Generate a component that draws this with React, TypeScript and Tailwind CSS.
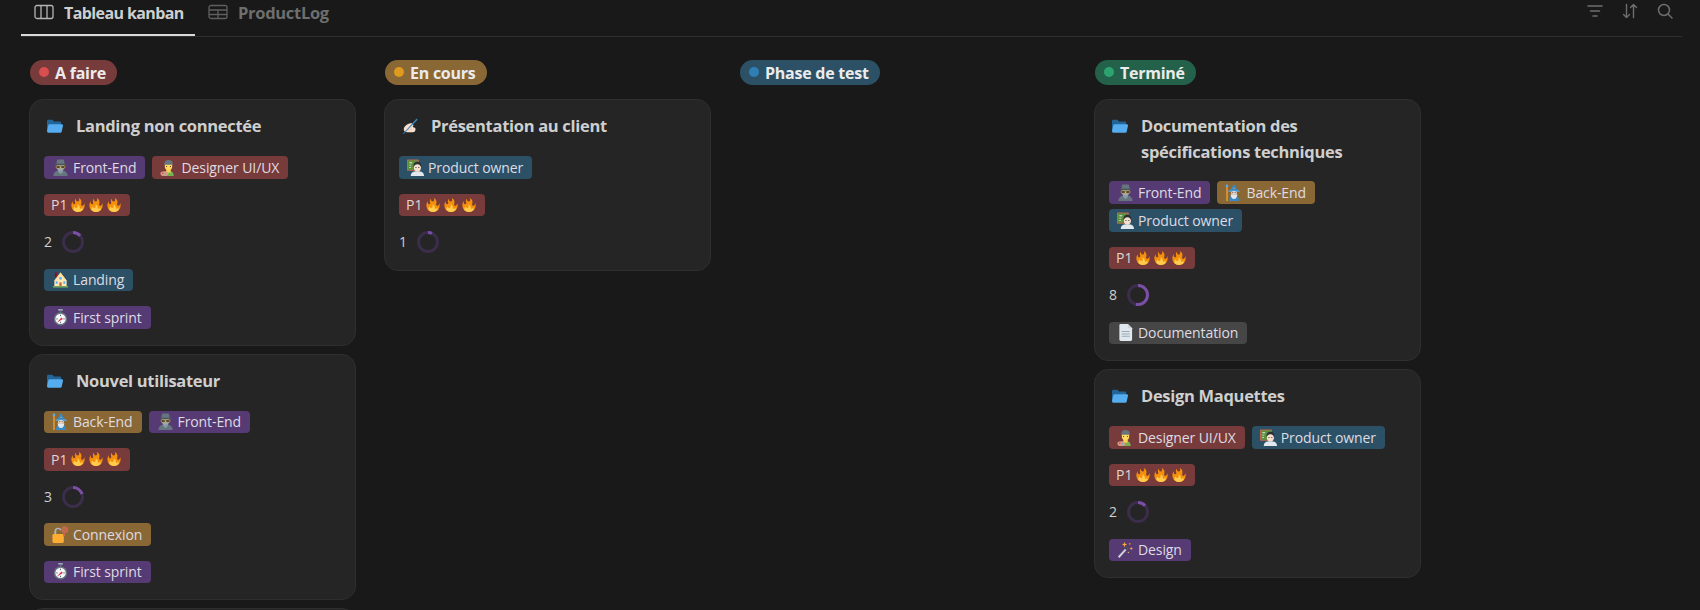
type EmojiName = "folder" | "write" | "spy" | "artist" | "wizard" | "teacher" | "fire" | "house" | "watch" | "lock" | "doc" | "wand";

// small hand drawn emoji, the page has no colour emoji font
function Emoji({ name, className }: { name: EmojiName; className: string }) {
    return (
        <svg viewBox="0 0 36 36" className={className}>
            {name === "folder" && (
                <>
                    <path d="M0 7a3 3 0 0 1 3-3h9l4 4h13a3 3 0 0 1 3 3v20H3a3 3 0 0 1-3-3z" fill="#226699" />
                    <path d="M6 14h27a3 3 0 0 1 3 3.500L33 31a3 3 0 0 1-3 2H3a3 3 0 0 1-3-3l3-14a3 3 0 0 1 3-2z" fill="#55ACEE" />
                </>
            )}
            {name === "write" && (
                <>
                    <path d="M4 24c1-5 6-9 11-11l6-2 5 5-2 4 5 2c3 3 1 10-4 10H12c-5 0-9-3-8-8z" fill="#F7DECE" />
                    <path d="M10 25c4 2 9 2 13 0" stroke="#E0B9A3" strokeWidth="1.500" fill="none" />
                    <path d="M33 1 4 33l-3 3 4-1L35 4z" fill="#3B88C3" />
                </>
            )}
            {name === "spy" && (
                <>
                    <path d="M3 36c0-8 6-12 15-12s15 4 15 12z" fill="#66757F" />
                    <path d="M13 22h10v6l-5 4-5-4z" fill="#8899A6" />
                    <ellipse cx="18" cy="17" rx="8" ry="8" fill="#99AAB5" />
                    <path d="M11 1h14l2 10H9z" fill="#66757F" />
                    <rect x="4" y="10" width="28" height="3" rx="1.500" fill="#4B545C" />
                    <rect x="9" y="14.500" width="8" height="5" rx="1" fill="#292F33" stroke="#FFCC4D" strokeWidth="1.200" />
                    <rect x="19" y="14.500" width="8" height="5" rx="1" fill="#292F33" stroke="#FFCC4D" strokeWidth="1.200" />
                </>
            )}
            {name === "artist" && (
                <>
                    <path d="M7 36c0-8 5-11 11-11s11 3 11 11z" fill="#77B255" />
                    <path d="M13 23h10l-1 6h-8z" fill="#FFCC4D" />
                    <ellipse cx="18" cy="15" rx="8" ry="9" fill="#FFDC5D" />
                    <path d="M9 11c0-7 4-9 9-9s9 2 9 7v3H9z" fill="#66757F" />
                    <rect x="13" y="15" width="2" height="2" fill="#662113" />
                    <rect x="21" y="15" width="2" height="2" fill="#662113" />
                    <ellipse cx="9" cy="31" rx="8" ry="5" fill="#D99E82" />
                    <circle cx="6" cy="30" r="1.600" fill="#DD2E44" />
                    <circle cx="11" cy="32" r="1.600" fill="#55ACEE" />
                </>
            )}
            {name === "wizard" && (
                <>
                    <rect x="3" y="5" width="2.500" height="31" fill="#FFAC33" />
                    <circle cx="4.200" cy="4" r="2.800" fill="#55ACEE" />
                    <path d="M8 36c0-8 4-12 11-12s11 4 11 12z" fill="#3B88C3" />
                    <path d="M19 0 10 15h18z" fill="#3B88C3" />
                    <circle cx="19" cy="9" r="1.200" fill="#FFCC4D" />
                    <rect x="7" y="14" width="24" height="2.500" rx="1.200" fill="#55ACEE" />
                    <ellipse cx="19" cy="19" rx="6" ry="4" fill="#F7DECE" />
                    <path d="M12 21c2 2 12 2 14 0 0 7-3 11-7 11s-7-4-7-11z" fill="#E1E8ED" />
                    <rect x="15.500" y="17.500" width="2" height="2" fill="#292F33" />
                    <rect x="20.500" y="17.500" width="2" height="2" fill="#292F33" />
                </>
            )}
            {name === "teacher" && (
                <>
                    <rect x="0" y="1" width="25" height="24" rx="1.500" fill="#C1694F" />
                    <rect x="2" y="3" width="21" height="20" fill="#5C913B" />
                    <path d="M5 7h6v2H5zM5 12h4v2H5zM5 17h3v2H5z" fill="#E1E8ED" />
                    <path d="M8 36c0-7 5-10 14-10s14 3 14 10z" fill="#E1E8ED" />
                    <ellipse cx="22" cy="18" rx="7.500" ry="8.500" fill="#F7DECE" />
                    <path d="M14 18c-1-9 3-12 8-12s9 3 8 12c-1-4-3-7-8-7s-7 3-8 7z" fill="#292F33" />
                    <rect x="18" y="17" width="2" height="2" fill="#292F33" />
                    <rect x="24" y="17" width="2" height="2" fill="#292F33" />
                </>
            )}
            {name === "fire" && (
                <>
                    <path d="M35 19c0-2.062-.367-4.039-1.04-5.868-.46 5.389-3.333 8.157-6.335 6.868-2.812-1.208-.917-5.917-.777-8.164.236-3.809-.012-8.169-6.931-11.794 2.875 5.500.333 8.917-2.333 9.125-2.958.231-5.667-2.542-4.667-7.042-3.238 2.386-3.332 6.402-2.333 9 1.042 2.708-.042 4.958-2.583 5.208-2.84.28-4.418-3.041-2.963-8.333C2.52 10.965 1 14.805 1 19c0 9.389 7.611 17 17 17s17-7.611 17-17z" fill="#F4900C" />
                    <path d="M28.394 23.999c.148 3.084-2.561 4.293-4.019 3.709-2.106-.843-1.541-2.291-2.083-5.291s-2.625-5.083-5.708-6c2.250 6.333-1.247 8.667-3.080 9.084-1.872.426-3.753-.001-3.968-4.007C7.352 23.668 6 26.676 6 30c0 .368.023.73.055 1.090C9.125 34.124 13.342 36 18 36s8.875-1.876 11.945-4.910c.032-.36.055-.722.055-1.090 0-2.187-.584-4.236-1.606-6.001z" fill="#FFCC4D" />
                </>
            )}
            {name === "house" && (
                <>
                    <rect x="6" y="3" width="4" height="10" fill="#A0041E" />
                    <path d="M5 20 13 10l5-7 6 8 7 9v12H5z" fill="#FFE8B6" />
                    <path d="M18 3 5 20l2 1 11-14 11 14 2-1z" fill="#FFD983" />
                    <rect x="15.500" y="24" width="5" height="8" fill="#C1694F" />
                    <rect x="8" y="22" width="4" height="5" fill="#55ACEE" />
                    <rect x="24" y="22" width="4" height="5" fill="#55ACEE" />
                    <rect x="15.500" y="13" width="5" height="5" fill="#55ACEE" />
                    <rect x="2" y="32" width="32" height="3" fill="#77B255" />
                </>
            )}
            {name === "watch" && (
                <>
                    <rect x="13" y="0" width="10" height="3.500" rx="1" fill="#99AAB5" />
                    <rect x="16.500" y="3" width="3" height="5" fill="#66757F" />
                    <circle cx="18" cy="21" r="14" fill="#66757F" />
                    <circle cx="18" cy="21" r="11" fill="#F5F8FA" />
                    <path d="M10 29 20 18l3 3z" fill="#DD2E44" />
                    <path d="M18 12v3M27 21h-3M9 21h3M18 30v-3" stroke="#292F33" strokeWidth="1.500" />
                </>
            )}
            {name === "lock" && (
                <>
                    <path d="M5 19V11a8 8 0 0 1 15-3l-3 2a4 4 0 0 0-8 1v8z" fill="#AAB8C2" />
                    <rect x="1" y="17" width="24" height="19" rx="3" fill="#FFAC33" />
                    <path d="M24 15v7h4v-7z" fill="#C1694F" />
                    <circle cx="27" cy="8" r="7.500" fill="#C1694F" />
                </>
            )}
            {name === "doc" && (
                <>
                    <path d="M5 3a3 3 0 0 1 3-3h15l9 9v24a3 3 0 0 1-3 3H8a3 3 0 0 1-3-3z" fill="#E1E8ED" />
                    <path d="M23 0v7a2 2 0 0 0 2 2h7z" fill="#CCD6DD" />
                    <path d="M10 15h17v2H10zM10 20h17v2H10zM10 25h17v2H10z" fill="#99AAB5" />
                </>
            )}
            {name === "wand" && (
                <>
                    <path d="M2 33 20 13l3 3L5 36z" fill="#CCD6DD" />
                    <path d="M17 16.500 20 13l3 3-3.500 3z" fill="#292F33" />
                    <path d="M16 2l1.500 4 4 1.500-4 1.500-1.500 4-1.500-4-4-1.500 4-1.500zM30 12l1 3 3 1-3 1-1 3-1-3-3-1 3-1z" fill="#FFAC33" />
                    <circle cx="27" cy="6" r="1.800" fill="#F4900C" />
                    <circle cx="24" cy="24" r="1.500" fill="#FFCC4D" />
                </>
            )}
        </svg>
    );
}

const tagColors = {
    purple: "bg-[#563a73]",
    red: "bg-[#783b3b]",
    brown: "bg-[#8a6835]",
    blue: "bg-[#2c5167]",
    gray: "bg-[#464646]",
};

type TagDef = { emoji: EmojiName; label: string; color: keyof typeof tagColors };

const frontEnd: TagDef = { emoji: "spy", label: "Front-End", color: "purple" };
const designer: TagDef = { emoji: "artist", label: "Designer UI/UX", color: "red" };
const backEnd: TagDef = { emoji: "wizard", label: "Back-End", color: "brown" };
const owner: TagDef = { emoji: "teacher", label: "Product owner", color: "blue" };
const landing: TagDef = { emoji: "house", label: "Landing", color: "blue" };
const sprint: TagDef = { emoji: "watch", label: "First sprint", color: "purple" };
const connexion: TagDef = { emoji: "lock", label: "Connexion", color: "brown" };
const documentation: TagDef = { emoji: "doc", label: "Documentation", color: "gray" };
const design: TagDef = { emoji: "wand", label: "Design", color: "purple" };

type CardDef = { icon: EmojiName; title: string; owners: TagDef[]; points: number; extras: TagDef[] };

const columns = [
    {
        name: "A faire",
        pill: "bg-[#783b3b]",
        dot: "bg-[#d94f4f]",
        cards: [
            { icon: "folder", title: "Landing non connectée", owners: [frontEnd, designer], points: 2, extras: [landing, sprint] },
            { icon: "folder", title: "Nouvel utilisateur", owners: [backEnd, frontEnd], points: 3, extras: [connexion, sprint] },
            { icon: "folder", title: "", owners: [], points: 0, extras: [] },
        ] as CardDef[],
    },
    {
        name: "En cours",
        pill: "bg-[#8a6835]",
        dot: "bg-[#df9a20]",
        cards: [{ icon: "write", title: "Présentation au client", owners: [owner], points: 1, extras: [] }] as CardDef[],
    },
    { name: "Phase de test", pill: "bg-[#2c5167]", dot: "bg-[#2f7fb5]", cards: [] as CardDef[] },
    {
        name: "Terminé",
        pill: "bg-[#24614a]",
        dot: "bg-[#2ba56f]",
        cards: [
            { icon: "folder", title: "Documentation des spécifications techniques", owners: [frontEnd, backEnd, owner], points: 8, extras: [documentation] },
            { icon: "folder", title: "Design Maquettes", owners: [designer, owner], points: 2, extras: [design] },
        ] as CardDef[],
    },
];

function Tag({ tag }: { tag: TagDef }) {
    return (
        <span className={`flex h-[22.500px] items-center gap-[4px] rounded-[4px] pl-[8px] pr-[9px] tracking-[-0.1px] text-[#dfdbe2] ${tagColors[tag.color]}`}>
            <Emoji name={tag.emoji} className="h-[17px] w-[17px] shrink-0" />
            <span className="whitespace-nowrap pt-px">{tag.label}</span>
        </span>
    );
}

function Ring({ value }: { value: number }) {
    const length = 2 * Math.PI * 9.5;
    return (
        <svg viewBox="0 0 22 22" className="h-[22px] w-[22px] -rotate-90">
            <circle cx="11" cy="11" r="9.500" fill="none" stroke="#3b2d4b" strokeWidth="3" />
            <circle cx="11" cy="11" r="9.500" fill="none" stroke="#7b4fa6" strokeWidth="3" strokeDasharray={`${length * (value / 15)} ${length}`} />
        </svg>
    );
}

function Card({ card }: { card: CardDef }) {
    return (
        <div className="rounded-[14px] border border-[#2f2f2f] bg-[#252525] px-[14px] pb-[16px] pt-[13px] text-[14px] leading-[20px]">
            <div className="flex min-h-[27px] items-start">
                <Emoji name={card.icon} className="ml-[3px] mt-[5px] h-[16px] w-[16px] shrink-0" />
                <div className="ml-[13px] text-[16.500px] font-bold leading-[26px] tracking-[-0.3px] text-[#cfcfcf]">{card.title}</div>
            </div>
            {card.owners.length > 0 && (
                <div className="mt-[16px] flex flex-col gap-[15px]">
                    <div className="flex flex-wrap gap-x-[7px] gap-y-[5.500px]">
                        {card.owners.map((tag, i) => (
                            <Tag key={i} tag={tag} />
                        ))}
                    </div>
                    <div className="flex">
                        <span className="flex h-[22.500px] items-center gap-[4px] rounded-[4px] bg-[#783b3b] pl-[7px] pr-[9px] text-[#dfd6d6]">
                            <span className="pt-px">P1</span>
                            {[0, 1, 2].map((i) => (
                                <Emoji key={i} name="fire" className="h-[14px] w-[14px]" />
                            ))}
                        </span>
                    </div>
                    <div className="flex h-[22.500px] items-center gap-[11px] text-[#cfcfcf]">
                        <span className="w-[7px]">{card.points}</span>
                        <Ring value={card.points} />
                    </div>
                    {card.extras.map((tag, i) => (
                        <div key={i} className="flex">
                            <Tag tag={tag} />
                        </div>
                    ))}
                </div>
            )}
            {card.owners.length === 0 && <div className="h-[200px]" />}
        </div>
    );
}

export default function App() {
    return (
        <div className="h-[610px] w-[1700px] overflow-hidden bg-[#191919] font-['Open_Sans',sans-serif]">
            <div className="ml-[21px] mr-[18px] flex h-[37px] items-start justify-between border-b border-[#2f2f2f]">
                <div className="flex">
                    <div className="flex h-[36px] w-[174px] items-start gap-[10px] border-b-2 border-[#d9d9d9] pl-[13px] pt-[2px] text-[16px] font-bold leading-[22px] tracking-[-0.6px] text-[#cfcfcf]">
                        <svg viewBox="0 0 20 16" fill="none" stroke="#b5b5b5" strokeWidth="1.300" className="mt-[2px] h-[16px] w-[20px]">
                            <rect x="1" y="1.500" width="18" height="13" rx="2" />
                            <path d="M7 1.500v13M13 1.500v13" />
                        </svg>
                        Tableau kanban
                    </div>
                    <div className="flex items-start gap-[10px] pl-[13px] pt-[2px] text-[16.500px] font-bold leading-[22px] tracking-[-0.3px] text-[#6e6e6e]">
                        <svg viewBox="0 0 20 16" fill="none" stroke="#5f5f5f" strokeWidth="1.300" className="mt-[2px] h-[16px] w-[20px]">
                            <rect x="1" y="1.500" width="18" height="13" rx="2" />
                            <path d="M1 6h18M1 10.500h18M10 6v8.500" />
                        </svg>
                        ProductLog
                    </div>
                </div>
                <div className="mr-[9px] flex items-center gap-[19px] pt-[3px]">
                    <svg viewBox="0 0 16 14" fill="none" stroke="#6e6e6e" strokeWidth="1.500" strokeLinecap="round" className="h-[14px] w-[16px]">
                        <path d="M1 2h14M3.500 7h9M6 12h4" />
                    </svg>
                    <svg viewBox="0 0 16 16" fill="none" stroke="#6e6e6e" strokeWidth="1.400" strokeLinecap="round" strokeLinejoin="round" className="h-[16px] w-[16px]">
                        <path d="M4.500 1.500v13M1.500 11.500l3 3 3-3M11.500 14.500v-13M8.500 4.500l3-3 3 3" />
                    </svg>
                    <svg viewBox="0 0 16 16" fill="none" stroke="#6e6e6e" strokeWidth="1.500" strokeLinecap="round" className="h-[16px] w-[16px]">
                        <circle cx="7" cy="7" r="5.500" />
                        <path d="M11 11l4 4" />
                    </svg>
                </div>
            </div>
            <div className="flex gap-[28px] pl-[29px] pt-[23px]">
                {columns.map((col) => (
                    <div key={col.name} className="w-[327px] shrink-0">
                        <div className="ml-px flex">
                            <div className={`mb-[14px] flex h-[25px] items-center gap-[6px] rounded-full pl-[9px] pr-[11px] text-[16px] font-bold tracking-[-0.25px] text-[#ebebeb] ${col.pill}`}>
                                <span className={`mb-px h-[10px] w-[10px] rounded-full ${col.dot}`} />
                                {col.name}
                            </div>
                        </div>
                        <div className="flex flex-col gap-[8px]">
                            {col.cards.map((card, i) => (
                                <Card key={i} card={card} />
                            ))}
                        </div>
                    </div>
                ))}
            </div>
        </div>
    );
}
